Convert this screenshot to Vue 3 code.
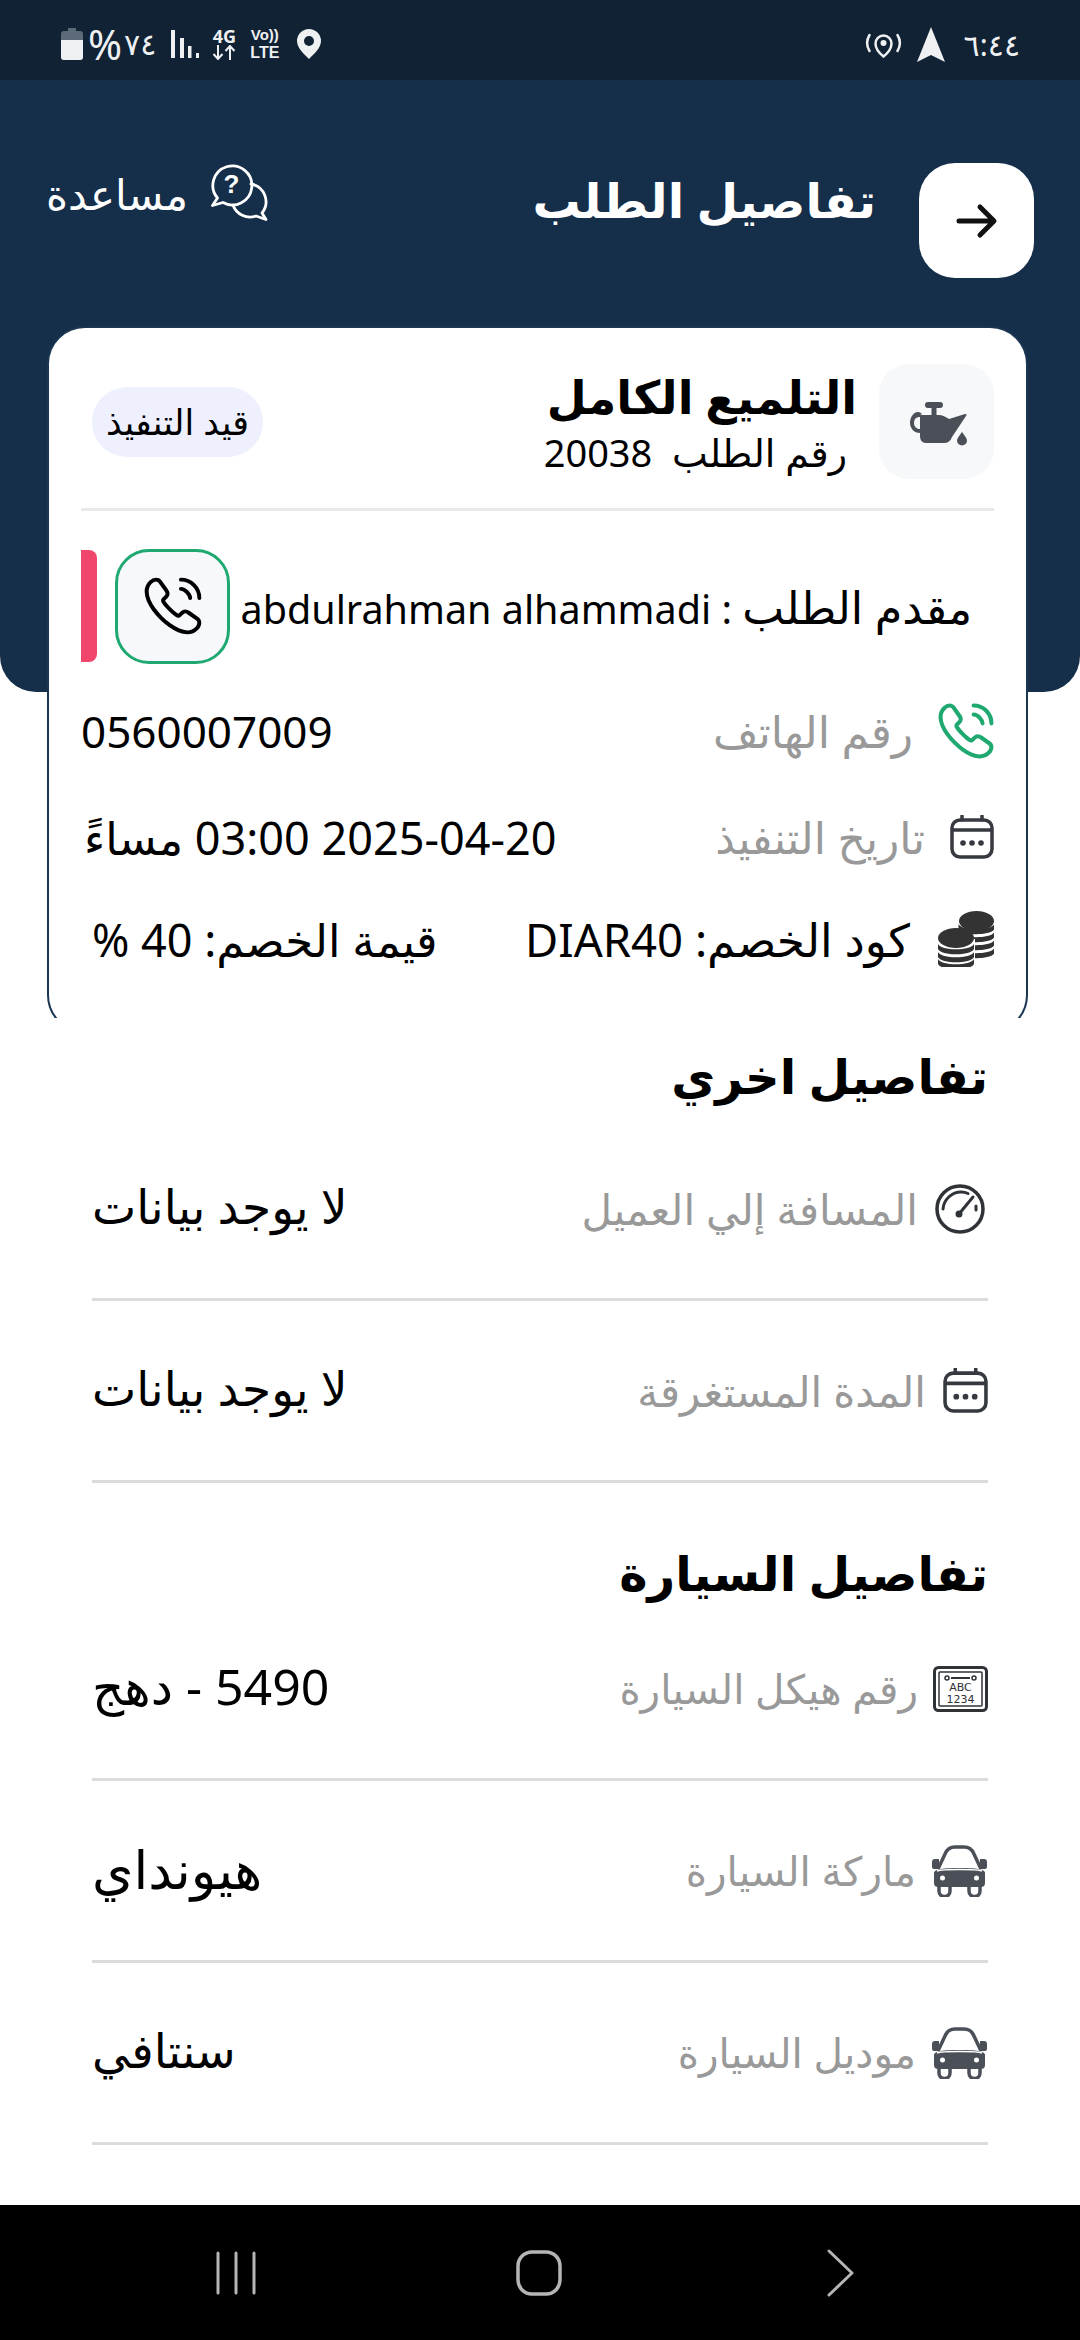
<script setup>
const sections = [
  {
    title: 'تفاصيل اخري',
    cls: 'first',
    rows: [
      { icon: 'gauge', label: 'المسافة إلي العميل', value: 'لا يوجد بيانات', vc: '' },
      { icon: 'cal', label: 'المدة المستغرقة', value: 'لا يوجد بيانات', vc: '' },
    ],
  },
  {
    title: 'تفاصيل السيارة',
    cls: 'second',
    rows: [
      { icon: 'plate', label: 'رقم هيكل السيارة', value: '5490 - دهج', vc: 'v-num' },
      { icon: 'car', label: 'ماركة السيارة', value: 'هيونداي', vc: 'v-wide' },
      { icon: 'car', label: 'موديل السيارة', value: 'سنتافي', vc: '' },
    ],
  },
]
const phonePath = 'M21.97 18.33c0 .36-.08.73-.25 1.09-.17.36-.39.7-.68 1.02-.49.54-1.03.93-1.64 1.18-.6.25-1.25.38-1.95.38-1.02 0-2.11-.24-3.26-.73s-2.3-1.15-3.44-1.98a28.75 28.75 0 0 1-3.28-2.8 28.414 28.414 0 0 1-2.79-3.27c-.82-1.14-1.48-2.28-1.96-3.41C2.24 8.67 2 7.58 2 6.54c0-.68.12-1.33.36-1.93.24-.61.62-1.17 1.15-1.67C4.15 2.31 4.85 2 5.59 2c.28 0 .56.06.81.18.26.12.49.3.67.56l2.32 3.27c.18.25.31.48.4.7.09.21.14.42.14.61 0 .24-.07.48-.21.71-.13.23-.32.47-.56.71l-.76.79c-.11.11-.16.24-.16.4 0 .08.01.15.03.23.03.08.06.14.08.2.18.33.49.76.93 1.28.45.52.93 1.05 1.45 1.58.54.53 1.06 1.02 1.59 1.47.52.44.95.74 1.29.92.05.02.11.05.18.08.08.03.16.04.25.04.17 0 .3-.06.41-.17l.76-.75c.25-.25.49-.44.72-.56.23-.14.46-.21.71-.21.19 0 .39.04.61.13.22.09.45.22.7.39l3.31 2.35c.26.18.44.39.55.64.1.25.16.5.16.78ZM18.5 9c0-.6-.47-1.52-1.17-2.27-.64-.69-1.49-1.23-2.33-1.23M22 9c0-3.87-3.13-7-7-7'
const coinBand = 'M0 0c3 7 33 7 36 0v5c-3 7-33 7-36 0z'
</script>

<template>
  <div class="page" dir="rtl">
    <div class="status" dir="ltr">
      <div class="st-left">
        <svg width="22" height="32" viewBox="0 0 22 32"><path d="M7 0h8v3h4a3 3 0 0 1 3 3v23a3 3 0 0 1-3 3H3a3 3 0 0 1-3-3V6a3 3 0 0 1 3-3h4z" fill="#5d6b78"/><path d="M0 12h22v17a3 3 0 0 1-3 3H3a3 3 0 0 1-3-3z" fill="#eef0f2"/></svg>
        <span class="pct">%</span><span class="lvl">٧٤</span>
        <svg class="sig" width="28" height="29" viewBox="0 0 28 29"><g fill="#eef0f2"><rect x="0" y="0" width="4" height="28"/><rect x="9" y="8" width="4" height="20"/><rect x="17" y="16" width="3.500" height="12"/><rect x="25" y="23" width="3" height="5"/></g></svg>
        <span class="net"><b>4G</b><svg width="24" height="15" viewBox="0 0 24 15"><path d="M6 0v13M1.500 9l4.500 5 4.500-5M18 15V2M13.500 6 18 1l4.500 5" fill="none" stroke="#eef0f2" stroke-width="2"/></svg></span>
        <span class="volte"><b class="vo">Vo))</b><b class="lte">LTE</b></span>
        <svg width="24" height="30" viewBox="0 0 24 30"><path fill-rule="evenodd" d="M12 0a12 12 0 0 1 12 12c0 7-7 13-12 18C7 25 0 19 0 12A12 12 0 0 1 12 0zm0 7a5 5 0 1 0 0 10 5 5 0 0 0 0-10z" fill="#eef0f2"/></svg>
      </div>
      <div class="st-right">
        <svg width="37" height="28" viewBox="0 0 36 28"><g fill="none" stroke="#eef0f2" stroke-width="2.500" stroke-linecap="round"><path d="M18 26.500c-5-4-8-8-8-13a8 8 0 0 1 16 0c0 5-3 9-8 13z"/><path d="M4 5C1 10 1 16 4 21M32 5c3 5 3 11 0 16"/></g><circle cx="18" cy="13" r="3" fill="#eef0f2"/></svg>
        <svg class="nav-arrow" width="28" height="35" viewBox="0 0 28 35"><path d="M14 0l14 35-14-7-14 7z" fill="#eef0f2"/></svg>
        <span class="clock">٦:٤٤</span>
      </div>
    </div>

    <header class="hero">
      <button class="back" aria-label="back">
        <svg width="44" height="36" viewBox="0 0 44 36"><path d="M4 18h34M25 4l14 14-14 14" fill="none" stroke="#111" stroke-width="5" stroke-linecap="round" stroke-linejoin="round"/></svg>
      </button>
      <h1 class="title">تفاصيل الطلب</h1>
      <div class="help">
        <svg width="60" height="60" viewBox="0 0 60 60"><g fill="none" stroke="#fff" stroke-width="2.800" stroke-linejoin="round" stroke-linecap="round"><path d="M13 39.500 2.500 42.500 7.500 35A19.500 19.500 0 1 1 13 39.500z"/><path d="M41 21A18 18 0 0 1 52 50l4 6.500-10-3.500A18 18 0 0 1 23 42"/></g><text x="21.500" y="30" text-anchor="middle" font-size="26" font-weight="700" fill="#fff" font-family="Liberation Sans">?</text></svg>
        <span class="help-txt">مساعدة</span>
      </div>
    </header>

    <div class="card-clip">
      <div class="card">
        <div class="card-head">
          <div class="oil">
            <svg width="90" height="80" viewBox="0 0 90 80"><g fill="#4a4f58"><rect x="33" y="20" width="18" height="6" rx="3"/><rect x="39.500" y="25" width="5" height="9"/><path fill-rule="evenodd" d="M28 33H47C50 33 54 35 57 37L73 32C74.500 31.500 75 33 74 34L60 55C58.500 59 56 61 52 61H34C30 61 28 58 28 54V51C22 51 18 46 18 41C18 36 21 30 26 30C28 30 29 31 30 32ZM28 35C24 35 22 37 22 41C22 45 25 47 28 47Z"/><path d="M70 50c2 3 5 6 5 8.500a5 5 0 0 1-10 0c0-2.500 3-5.500 5-8.500z"/></g></svg>
          </div>
          <div class="head-txt">
            <div class="svc">التلميع الكامل</div>
            <div class="ord">رقم الطلب&nbsp; 20038</div>
          </div>
          <div class="pill">قيد التنفيذ</div>
        </div>

        <div class="req">
          <div class="req-name"><span class="req-ar">مقدم الطلب</span> : abdulrahman alhammadi</div>
          <button class="call" aria-label="call">
            <svg width="58" height="58" viewBox="1 1 22 22"><path :d="phonePath" fill="none" stroke="#000" stroke-width="1.500" stroke-linecap="round" stroke-linejoin="round"/></svg>
          </button>
          <span class="redbar"></span>
        </div>

        <div class="info phone">
          <svg width="56" height="56" viewBox="1 1 22 22"><path :d="phonePath" fill="none" stroke="#1fa971" stroke-width="1.600" stroke-linecap="round" stroke-linejoin="round"/></svg>
          <span class="lab">رقم الهاتف</span>
          <span class="val" dir="ltr">0560007009</span>
        </div>
        <div class="info date">
          <svg width="44" height="44" viewBox="0 0 44 44"><g fill="none" stroke="#363a40" stroke-width="3.500"><rect x="2" y="5" width="40" height="37" rx="8"/><path d="M2 15h40"/><path d="M12 1v4M32 1v4" stroke-linecap="round"/></g><g fill="#363a40"><circle cx="13" cy="28" r="2.800"/><circle cx="22" cy="28" r="2.800"/><circle cx="31" cy="28" r="2.800"/></g></svg>
          <span class="lab">تاريخ التنفيذ</span>
          <span class="val dt" dir="ltr"><bdi>مساءً</bdi> <bdi dir="ltr">03:00</bdi> <bdi dir="ltr">2025-04-20</bdi></span>
        </div>
        <div class="info coupon">
          <svg width="56" height="56" viewBox="0 0 56 56"><g fill="#333">
            <path v-for="y in [13, 21, 29, 37]" :key="y" :d="coinBand" :transform="`translate(20.500 ${y})`"/>
            <ellipse cx="38.500" cy="10" rx="17.500" ry="10"/>
            <path d="M-1 28h38v21c-3 9-35 9-38 0z" fill="#fff"/>
            <ellipse cx="18" cy="27" rx="18" ry="10"/>
            <path v-for="y in [33, 41, 48]" :key="y" :d="coinBand" :transform="`translate(0 ${y})`"/>
          </g></svg>
          <span class="lab black">كود الخصم: DIAR40</span>
          <span class="val disc">قيمة الخصم: 40 %</span>
        </div>
      </div>
    </div>

    <section v-for="s in sections" :key="s.title" class="sec" :class="s.cls">
      <h2 class="sec-title">{{ s.title }}</h2>
      <div v-for="r in s.rows" :key="r.label" class="row">
        <svg v-if="r.icon === 'gauge'" class="gauge" width="50" height="50" viewBox="0 0 50 50"><g fill="none" stroke="#2f3338" stroke-linecap="round"><circle cx="25" cy="25" r="23" stroke-width="3.500"/><path d="M8 25C9 15 17 8 26 8c3 0 5 .5 7 1.500M41 22v4" stroke-width="3"/><path d="M24 30l14-17" stroke-width="3"/></g><circle cx="24" cy="30" r="3.500" fill="#2f3338"/></svg>
        <svg v-else-if="r.icon === 'cal'" width="45" height="45" viewBox="0 0 44 44"><g fill="none" stroke="#363a40" stroke-width="3.500"><rect x="2" y="5" width="40" height="37" rx="8"/><path d="M2 15h40"/><path d="M12 1v4M32 1v4" stroke-linecap="round"/></g><g fill="#363a40"><circle cx="13" cy="28" r="2.800"/><circle cx="22" cy="28" r="2.800"/><circle cx="31" cy="28" r="2.800"/></g></svg>
        <svg v-else-if="r.icon === 'plate'" width="55" height="46" viewBox="0 0 55 46"><g fill="none" stroke="#2f3338"><rect x="1.500" y="1.500" width="52" height="43" rx="4" stroke-width="3"/><rect x="6" y="6" width="43" height="34" rx="1" stroke-width="1.500"/><path d="M18 12h19" stroke-width="2"/><circle cx="14" cy="12" r="2" stroke-width="1.500"/><circle cx="41" cy="12" r="2" stroke-width="1.500"/></g><text x="27.500" y="25" font-size="11" text-anchor="middle" font-family="DejaVu Sans" fill="#2f3338">ABC</text><text x="27.500" y="37" font-size="11" text-anchor="middle" font-family="DejaVu Sans" fill="#2f3338">1234</text></svg>
        <svg v-else width="57" height="52" viewBox="0 0 57 52"><g fill="#4a4f58"><path d="M1 17c0-2 1-3 3-3h4v10H3c-1 0-2-1-2-2zM56 17c0-2-1-3-3-3h-4v10h5c1 0 2-1 2-2z"/><path d="M3 28c0-3 5-5 25.500-5S54 25 54 28v10c0 3-2 4-4 4H7c-2 0-4-1-4-4z"/></g><g fill="none" stroke="#4a4f58" stroke-width="3.500" stroke-linejoin="round"><path d="M7 24 14 9c2-5 5-7 10-7h9c5 0 8 2 10 7l7 15"/><path d="M8 41v5a5 5 0 0 0 11 0v-5M38 41v5a5 5 0 0 0 11 0v-5"/></g><path d="M6 26c5-2 40-2 45 0" fill="none" stroke="#fff" stroke-width="1.500"/><circle cx="11.500" cy="33" r="2.500" fill="#fff"/><circle cx="45.500" cy="33" r="2.500" fill="#fff"/></svg>
        <span class="lab">{{ r.label }}</span>
        <span class="row-val" :class="r.vc">{{ r.value }}</span>
      </div>
    </section>

    <div class="grow"></div>

    <nav class="navbar" dir="ltr">
      <svg width="40" height="44" viewBox="0 0 40 44"><path d="M2 2v40M20 2v40M38 2v40" stroke="#b5b5b5" stroke-width="3" stroke-linecap="round"/></svg>
      <svg width="46" height="46" viewBox="0 0 46 46"><rect x="2" y="2" width="42" height="42" rx="14" fill="none" stroke="#b5b5b5" stroke-width="3.500"/></svg>
      <svg class="nav-back" width="28" height="48" viewBox="0 0 28 48"><path d="M3 2l23 22L3 46" fill="none" stroke="#b5b5b5" stroke-width="3" stroke-linecap="round" stroke-linejoin="round"/></svg>
    </nav>
  </div>
</template>

<style>
html, body { margin: 0; background: #fff; }
</style>

<style scoped>
.page {
  width: 1080px;
  height: 2340px;
  display: flex;
  flex-direction: column;
  background: #fff;
  font-family: "Noto Sans", "DejaVu Sans", sans-serif;
  color: #000;
  overflow: hidden;
}
.status {
  height: 80px;
  flex: none;
  background: #102234;
  color: #eef0f2;
  display: flex;
  justify-content: space-between;
  align-items: center;
  padding: 8px 60px 0 61px;
  box-sizing: border-box;
}
.st-left, .st-right { display: flex; align-items: center; }
.pct { font-size: 41px; line-height: 40px; margin-left: 5px; }
.lvl { font-size: 30px; line-height: 40px; margin-left: 2px; }
.sig { margin-left: 15px; }
.net, .volte { display: flex; flex-direction: column; align-items: center; }
.net { font-size: 18px; line-height: 17px; margin-left: 13px; }
.volte { margin-left: 14px; margin-right: 18px; font-family: "Liberation Sans", sans-serif; }
.vo { font-size: 15px; line-height: 18px; }
.lte { font-size: 16px; line-height: 18px; }
.nav-arrow { margin: 0 19px 0 15px; }
.clock { font-size: 30px; }

.hero {
  height: 612px;
  flex: none;
  box-sizing: border-box;
  background: #152e4a;
  border-radius: 0 0 36px 36px;
  padding: 83px 46px 0 46px;
  display: flex;
  align-items: flex-start;
  color: #fff;
}
.back {
  width: 115px;
  height: 115px;
  flex: none;
  background: #fff;
  border: 0;
  padding: 0;
  border-radius: 36px;
  display: flex;
  align-items: center;
  justify-content: center;
}
.title { margin: 2px 43px 0 0; font-size: 48px; line-height: 70px; font-weight: 700; white-space: nowrap; }
.help { margin-right: auto; display: flex; align-items: center; gap: 22px; }
.help-txt { font-size: 42px; }

.card-clip {
  height: 692px;
  flex: none;
  margin: -366px 52px 0 47px;
  overflow: hidden;
  position: relative;
}
.card {
  height: 707px;
  box-sizing: border-box;
  background: #fff;
  border: 2px solid #1b3652;
  border-radius: 38px;
  padding: 36px 32px 0 32px;
}
.card-head {
  display: flex;
  align-items: center;
  height: 115px;
  padding-bottom: 29px;
  border-bottom: 3px solid #e8e8e8;
}
.oil {
  width: 115px;
  height: 115px;
  flex: none;
  background: #f7f8fa;
  border-radius: 30px;
  display: flex;
  align-items: center;
  justify-content: center;
}
.head-txt { margin-right: 22px; }
.svc { font-size: 46px; line-height: 60px; font-weight: 700; white-space: nowrap; }
.ord { font-size: 38px; line-height: 52px; margin-right: 10px; white-space: nowrap; }
.pill {
  margin-right: auto;
  margin-left: 11px;
  width: 171px;
  height: 70px;
  border-radius: 35px;
  background: #eef1fd;
  display: flex;
  align-items: center;
  justify-content: center;
  font-size: 35px;
  white-space: nowrap;
}
.req { display: flex; align-items: center; height: 114px; margin-top: 38px; }
.req-name { font-size: 39.500px; padding-right: 22px; white-space: nowrap; min-width: 0; flex: 1 1 0; }
.req-ar { font-size: 44.500px; }
.call {
  width: 115px;
  height: 115px;
  flex: none;
  box-sizing: border-box;
  background: #f6f8fb;
  border: 3px solid #1fa971;
  border-radius: 34px;
  padding: 0;
  display: flex;
  align-items: center;
  justify-content: center;
}
.redbar { width: 16px; height: 112px; flex: none; margin-right: 18px; background: #f0466c; border-radius: 0 8px 8px 0; }

.info { display: flex; align-items: center; gap: 25px; white-space: nowrap; }
.phone { height: 56px; margin-top: 40px; }
.date { height: 44px; margin-top: 56px; }
.coupon { height: 56px; margin-top: 52px; gap: 28px; }
.lab { font-size: 44px; color: #999; white-space: nowrap; }
.lab.black { color: #000; font-size: 45.500px; }
.val { font-size: 44px; margin-right: auto; white-space: nowrap; }
.dt { font-size: 45px; margin-left: 3px; }
.disc { margin-left: 11px; font-size: 45px; }

.sec-title { margin: 0; font-size: 48px; font-weight: 700; line-height: 70px; }
.sec { padding: 0 92px; }
.first .sec-title { padding: 23px 0 8px; }
.second .sec-title { padding-top: 55px; margin-bottom: -9px; }
.row {
  height: 182px;
  box-sizing: border-box;
  border-bottom: 3px solid #dcdcdc;
  display: flex;
  align-items: center;
  gap: 17px;
  white-space: nowrap;
}
.second .row { gap: 15px; }
.gauge { margin-right: 3px; }
.row .lab { font-size: 42px; }
.second .row .lab { font-size: 40.500px; }
.row-val { font-size: 47px; margin-right: auto; padding-bottom: 5px; }
.v-num { font-size: 50px; }
.v-wide { font-size: 53px; }
.grow { flex: 1; }
.navbar {
  height: 135px;
  flex: none;
  background: #000;
  display: flex;
  align-items: center;
  gap: 260px;
  padding: 0 0 0 216px;
  box-sizing: border-box;
}
.nav-back { margin-left: 4px; }
</style>
